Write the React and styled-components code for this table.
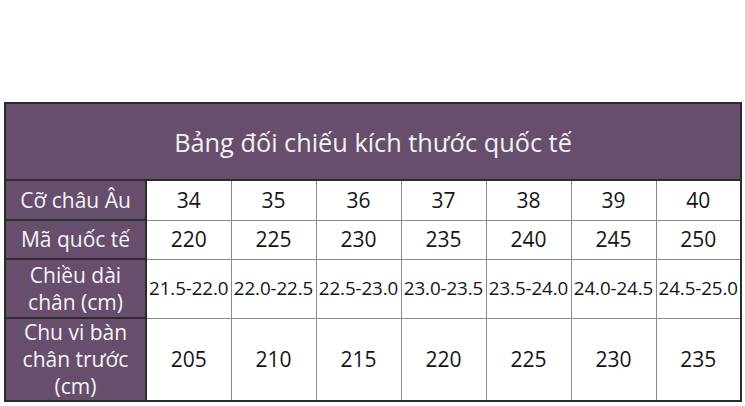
import React from "react";
import styled, { createGlobalStyle } from "styled-components";

const Global = createGlobalStyle`
  html, body { margin: 0; padding: 0; background: #ffffff; }
  body { font-family: "Open Sans", "Noto Sans", sans-serif; }
`;

const Page = styled.div`
  width: 745px;
  height: 406px;
  padding: 102px 0 0 4px;
  box-sizing: border-box;
  overflow: hidden;
`;

const Table = styled.table`
  border-collapse: collapse;
  table-layout: fixed;
  width: 736px;
  border: 2px solid #2b2b2b;
`;

const TitleCell = styled.th`
  height: 75px;
  background: #664e6c;
  color: #f4f2f5;
  font-weight: 400;
  font-size: 25.3px;
  line-height: 30px;
  text-align: center;
  padding: 0;
  border: 2px solid #2b2b2b;
`;

const Row = styled.tr`
  height: ${(p) => p.$h}px;
`;

const HeadCell = styled.th`
  background: #664e6c;
  color: #f6f4f7;
  font-weight: 400;
  font-size: 21px;
  line-height: 27px;
  text-align: center;
  padding: 0;
  border: 2px solid #2b2b2b;
  white-space: nowrap;
`;

const LabelLine = styled.div`
  line-height: 27px;
`;

const Cell = styled.td`
  color: #141414;
  font-size: ${(p) => (p.$small ? 18.8 : 21)}px;
  line-height: 25px;
  text-align: center;
  padding: 0;
  border: 1px solid #8a8a8a;
  white-space: nowrap;
  letter-spacing: ${(p) => (p.$small ? "-0.1px" : "0")};
`;

const rows = [
  { label: "Cỡ châu Âu", h: 40, values: ["34", "35", "36", "37", "38", "39", "40"] },
  { label: "Mã quốc tế", h: 39, values: ["220", "225", "230", "235", "240", "245", "250"] },
  {
    label: ["Chiều dài", "chân (cm)"],
    h: 59,
    small: true,
    values: ["21.5-22.0", "22.0-22.5", "22.5-23.0", "23.0-23.5", "23.5-24.0", "24.0-24.5", "24.5-25.0"],
  },
  {
    label: ["Chu vi bàn", "chân trước", "(cm)"],
    h: 83,
    values: ["205", "210", "215", "220", "225", "230", "235"],
  },
];

export default function App() {
  return (
    <Page>
      <Global />
      <Table>
        <colgroup>
          <col style={{ width: 141 }} />
          {Array.from({ length: 7 }).map((_, i) => (
            <col key={i} style={{ width: 85 }} />
          ))}
        </colgroup>
        <thead>
          <tr>
            <TitleCell colSpan={8}>Bảng đối chiếu kích thước quốc tế</TitleCell>
          </tr>
        </thead>
        <tbody>
          {rows.map((r, i) => (
            <Row key={i} $h={r.h}>
              <HeadCell>
                {Array.isArray(r.label)
                  ? r.label.map((l, j) => <LabelLine key={j}>{l}</LabelLine>)
                  : r.label}
              </HeadCell>
              {r.values.map((v, j) => (
                <Cell key={j} $small={r.small}>
                  {v}
                </Cell>
              ))}
            </Row>
          ))}
        </tbody>
      </Table>
    </Page>
  );
}
